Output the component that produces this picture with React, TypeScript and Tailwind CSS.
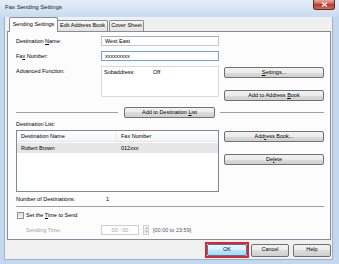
const font = "font-['Liberation_Sans',Arial,sans-serif]";
const btn =
  "flex items-center justify-center rounded-[2px] border border-[#707070] bg-[linear-gradient(#f2f2f2,#ebebeb_50%,#dddddd_50%,#cfcfcf)] text-[5.5px] leading-none text-black";

const Sep = ({ className = '' }: { className?: string }) => (
  <div className={`h-[2px] border-t border-[#a0a0a0] border-b-white border-b ${className}`} />
);

const App: React.FC = () => {
  return (
    <div className={`w-[339px] h-[264px] flex flex-col bg-[#c3d7ee] text-black ${font}`}>
      {/* title bar */}
      <div className="h-[17px] flex items-start bg-[linear-gradient(#e4eef9,#c9dbef)]">
        <span className="ml-[5px] mt-[4px] text-[6px] leading-[7px] text-[#1a1a1a]">Fax Sending Settings</span>
        <div className="ml-auto mr-[4px] w-[22px] h-[10px] rounded-b-[3px] border border-t-0 border-[#5d2a26] bg-[linear-gradient(#e8a99e,#c8564a_50%,#b53a2c_50%,#d66a55)] flex items-center justify-center">
          <svg width="7" height="5" viewBox="0 0 7 5">
            <path d="M1 0.5 L6 4.5 M6 0.5 L1 4.5" stroke="white" strokeWidth="1.2" />
          </svg>
        </div>
      </div>

      {/* client area */}
      <div className="ml-[4px] mr-[6px] mb-[4px] flex-1 flex flex-col bg-[#f0f0f0] border-l border-r border-b border-[#9cb3cd]">
        {/* tabs */}
        <div className="h-[14px] flex items-end pl-[4px] text-[5.5px] leading-none">
          <div className="relative z-10 -mb-px h-[15px] w-[49px] flex items-center justify-center bg-[#fcfcfc] border border-b-0 border-[#898c95] rounded-t-[2px] pb-[1px]">
            Sending Settings
          </div>
          <div className="h-[11px] w-[50px] flex items-center justify-center border border-l-0 border-b-0 border-[#898c95] bg-[linear-gradient(#f6f6f6,#e2e2e2)] rounded-tr-[2px]">
            Edit Address Book
          </div>
          <div className="ml-px h-[11px] w-[35px] flex items-center justify-center border border-b-0 border-[#898c95] bg-[linear-gradient(#f6f6f6,#e2e2e2)] rounded-t-[2px]">
            Cover Sheet
          </div>
        </div>

        {/* tab panel */}
        <div className="ml-[2px] w-[324px] h-[209px] border border-[#898c95] bg-[#fcfcfc] pl-[8px] pr-[6px] flex flex-col text-[5.5px] leading-[7px]">
          <div className="mt-[4px] h-[10px] flex items-center">
            <span className="w-[85px]">Destination <u>N</u>ame:</span>
            <div className="w-[118px] h-[10px] border border-[#c5c7cc] border-t-[#abadb3] bg-white pl-[3px] flex items-center">West East</div>
          </div>
          <div className="mt-[5px] h-[10px] flex items-center">
            <span className="w-[85px]">Fa<u>x</u> Number:</span>
            <div className="w-[118px] h-[10px] border border-[#6fa6d8] bg-white pl-[3px] flex items-center">xxxxxxxxx</div>
          </div>

          <div className="mt-[5px] flex">
            <span className="w-[85px] pt-[2px]">Advanced Function:</span>
            <div className="w-[118px] h-[31px] border border-[#d9d9d9] bg-white pl-[2px] pt-[2px] flex">
              <span className="w-[49px]">Subaddress:</span>
              <span>Off</span>
            </div>
            <div className="ml-[5px] w-[100px] flex flex-col">
              <div className={`${btn} mt-[1px] h-[11px]`}>
                <span><u>S</u>ettings...</span>
              </div>
              <div className={`${btn} mt-[12px] h-[11px]`}>
                <span>Add to Address <u>B</u>ook</span>
              </div>
            </div>
          </div>

          <div className="mt-[6px] h-[11px] flex items-center">
            <Sep className="w-[102px]" />
            <div className={`${btn} ml-[6px] w-[91px] h-[11px]`}>
              <span>Add to Destination <u>L</u>ist</span>
            </div>
            <Sep className="ml-[5px] flex-1" />
          </div>

          <div className="mt-[3px] h-[7px]">Destination List:</div>

          <div className="mt-[2px] flex">
            <div className="w-[203px] h-[62px] border border-[#828790] bg-white flex flex-col">
              <div className="h-[11px] flex items-center border-b border-[#e5e5e5] bg-[linear-gradient(#ffffff,#f3f4f6)]">
                <span className="pl-[4px] w-[100px] border-r border-[#e5e5e5]">Destination Name</span>
                <span className="pl-[4px]">Fax Number</span>
              </div>
              <div className="mt-px h-[10px] flex items-center bg-[#e6e6e6]">
                <span className="pl-[4px] w-[100px]">Robert Brown</span>
                <span className="pl-[4px]">012xxx</span>
              </div>
            </div>
            <div className="ml-[5px] w-[100px] flex flex-col">
              <div className={`${btn} mt-[1px] h-[11px]`}>
                <span>Add<u>r</u>ess Book...</span>
              </div>
              <div className={`${btn} mt-[12px] h-[11px]`}>
                <span>De<u>l</u>ete</span>
              </div>
            </div>
          </div>

          <div className="mt-[4px] h-[7px] flex">
            <span className="w-[90px]">Number of Destinations:</span>
            <span>1</span>
          </div>

          <Sep className="mt-[3px]" />

          <div className="mt-[3px] h-[8px] flex items-center">
            <div className="ml-px w-[7px] h-[7px] border border-[#8f8f8f] bg-[linear-gradient(#dcdcdc,#f8f8f8)]" />
            <span className="ml-[2px]">Set the <u>T</u>ime to Send</span>
          </div>

          <div className="mt-[6px] h-[10px] flex items-center text-[#a3a3a3]">
            <span className="pl-[10px] w-[85px]">Sending Time:</span>
            <div className="w-[38px] h-[10px] border border-[#cfcfcf] bg-white flex items-center justify-center">00 : 00</div>
            <div className="ml-[4px] w-[6px] h-[10px] flex flex-col border border-[#cfcfcf] bg-[#f4f4f4]">
              <div className="flex-1 flex items-center justify-center border-b border-[#d9d9d9]">
                <svg width="3" height="2" viewBox="0 0 3 2"><path d="M0 2 L1.5 0 L3 2Z" fill="#b0b0b0" /></svg>
              </div>
              <div className="flex-1 flex items-center justify-center">
                <svg width="3" height="2" viewBox="0 0 3 2"><path d="M0 0 L1.5 2 L3 0Z" fill="#b0b0b0" /></svg>
              </div>
            </div>
            <span className="ml-[4px] text-[#5a5a5a]">[00:00 to 23:59]</span>
          </div>
        </div>

        {/* dialog buttons */}
        <div className="mt-[2px] flex items-center justify-end gap-[2px] pr-[1px]">
          <div className="border-[2px] border-[#e5222a] p-0">
            <div className="w-[40px] h-[12px] flex items-center justify-center rounded-[2px] border border-[#3c7fb1] bg-[linear-gradient(#eaf6fd,#d9f0fc_50%,#bee6fd_50%,#a7d9f5)] text-[5.5px] leading-none">
              OK
            </div>
          </div>
          <div className={`${btn} w-[38px] h-[13px]`}>Cancel</div>
          <div className={`${btn} ml-[2px] w-[38px] h-[13px]`}>Help</div>
        </div>
      </div>
    </div>
  );
};

export default App;
